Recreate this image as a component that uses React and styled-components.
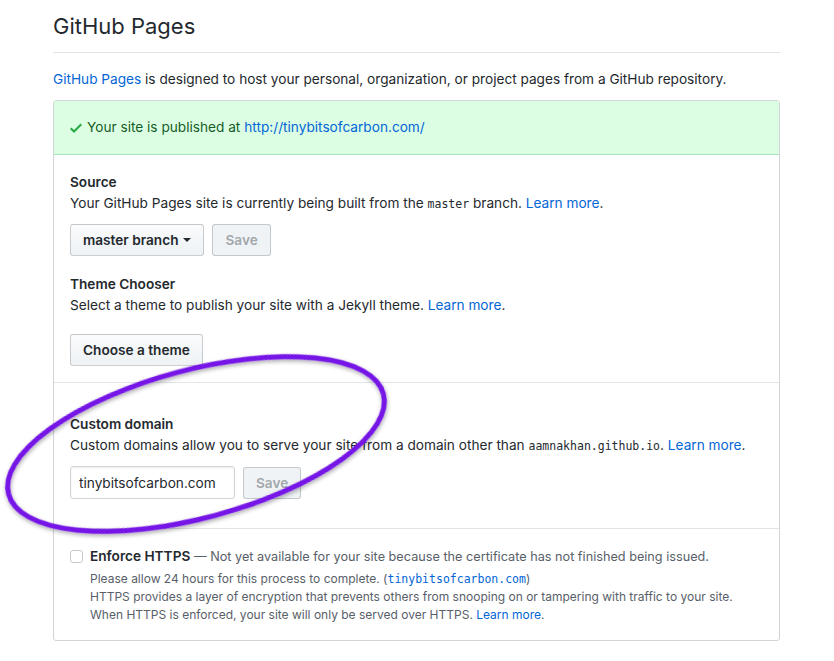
import React from 'react'
import styled, { createGlobalStyle } from 'styled-components'

const GlobalStyle = createGlobalStyle`
  body {
    margin: 0;
    background: #fff;
    font-family: Inter, "Liberation Sans", Arial, sans-serif;
    font-size: 13.65px;
    line-height: 1.5;
    color: #24292e;
  }
  * { box-sizing: border-box; }
`

const App = () => {
  return (
    <Page>
      <GlobalStyle />

      <Heading>GitHub Pages</Heading>

      <Intro>
        <Link href="#">GitHub Pages</Link> is designed to host your personal, organization, or project pages from a GitHub repository.
      </Intro>

      <Box>
        <Flash>
          <CheckIcon viewBox="0 0 12 16" width="12" height="16">
            <path fillRule="evenodd" d="M12 5l-8 8-4-4 1.5-1.5L4 10l6.5-6.5L12 5z" />
          </CheckIcon>
          Your site is published at <Link href="#">http://tinybitsofcarbon.com/</Link>
        </Flash>

        <Section>
          <Title>Source</Title>
          <Desc>
            Your GitHub Pages site is currently being built from the <Code>master</Code> branch. <Link href="#">Learn more</Link>.
          </Desc>
          <Row>
            <Button>master branch <Caret /></Button>
            <Button disabled>Save</Button>
          </Row>

          <Title $spaced>Theme Chooser</Title>
          <Desc>
            Select a theme to publish your site with a Jekyll theme. <Link href="#">Learn more</Link>.
          </Desc>
          <Row $gap={18}>
            <Button>Choose a theme</Button>
          </Row>
        </Section>

        <Section $roomy>
          <Title>Custom domain</Title>
          <Desc>
            Custom domains allow you to serve your site from a domain other than <Code>aamnakhan.github.io</Code>. <Link href="#">Learn more</Link>.
          </Desc>
          <Row>
            <Input defaultValue="tinybitsofcarbon.com" />
            <Button disabled>Save</Button>
          </Row>
        </Section>

        <Section $last>
          <CheckRow>
            <Checkbox />
            <div>
              <CheckLabel>
                <strong>Enforce HTTPS</strong> — Not yet available for your site because the certificate has not finished being issued.
              </CheckLabel>
              <Note>
                Please allow 24 hours for this process to complete. (<LinkCode>tinybitsofcarbon.com</LinkCode>)
                <br />
                HTTPS provides a layer of encryption that prevents others from snooping on or tampering with traffic to your site.
                <br />
                When HTTPS is enforced, your site will only be served over HTTPS. <Link href="#">Learn more</Link>.
              </Note>
            </div>
          </CheckRow>
        </Section>
      </Box>

      <Circle viewBox="0 0 834 661" width="834" height="661">
        <defs>
          <filter id="shadow" x="-20%" y="-20%" width="140%" height="140%">
            <feDropShadow dx="0" dy="2" stdDeviation="2" floodColor="#000" floodOpacity="0.35" />
          </filter>
        </defs>
        <ellipse
          cx="196"
          cy="444"
          rx="194"
          ry="74"
          transform="rotate(-15 196 444)"
          fill="none"
          stroke="#7614e6"
          strokeWidth="5"
          filter="url(#shadow)"
        />
      </Circle>
    </Page>
  )
}

export default App

const Page = styled.div`
  position: relative;
  width: 834px;
  height: 661px;
  padding-left: 53px;
  overflow: hidden;
`

const Heading = styled.h2`
  width: 727px;
  margin: 8px 0 0;
  padding-bottom: 8px;
  font-size: 22px;
  font-weight: 400;
  line-height: 36px;
  border-bottom: 1px solid #e1e4e8;
`

const Intro = styled.p`
  margin: 16px 0 10px;
  line-height: 21px;
`

const Link = styled.a`
  color: #0366d6;
  text-decoration: none;
`

const Box = styled.div`
  width: 727px;
  border: 1px solid #d1d5da;
  border-radius: 3px;
`

const Flash = styled.div`
  display: flex;
  align-items: center;
  gap: 4px;
  padding: 16px 16px;
  line-height: 21px;
  color: #165c26;
  background: #dcffe4;
  border-bottom: 1px solid #a6e3b5;
`

const CheckIcon = styled.svg`
  fill: #28a745;
  margin-right: 1px;
`

const Section = styled.div`
  padding: ${p => (p.$roomy ? '31px 16px 29px' : p.$last ? '16px' : '17px 16px 16px')};
  border-bottom: ${p => (p.$last ? 'none' : '1px solid #e1e4e8')};
`

const Title = styled.div`
  font-weight: 600;
  line-height: 21px;
  margin-top: ${p => (p.$spaced ? '18px' : '0')};
`

const Desc = styled.div`
  line-height: 21px;
`

const Code = styled.code`
  font-family: "DejaVu Sans Mono", "Liberation Mono", monospace;
  font-size: 11.5px;
  line-height: 1;
`

const Row = styled.div`
  display: flex;
  align-items: center;
  gap: 8px;
  margin-top: ${p => p.$gap || 10}px;
`

const Button = styled.button`
  display: inline-flex;
  align-items: center;
  gap: 5px;
  height: 32px;
  padding: 0 12px;
  font-family: inherit;
  font-size: 13.65px;
  font-weight: 600;
  color: ${p => (p.disabled ? 'rgba(36,41,46,0.4)' : '#24292e')};
  background: ${p => (p.disabled ? '#eff3f6' : 'linear-gradient(-180deg, #fafbfc 0%, #eff3f6 90%)')};
  border: 1px solid rgba(27, 31, 35, 0.2);
  border-radius: 3px;
`

const Caret = styled.span`
  display: inline-block;
  width: 0;
  height: 0;
  border-top: 4px solid #24292e;
  border-left: 4px solid transparent;
  border-right: 4px solid transparent;
`

const Input = styled.input`
  width: 165px;
  height: 33px;
  padding: 0 8px;
  font-family: inherit;
  font-size: 13.65px;
  color: #24292e;
  border: 1px solid #d1d5da;
  border-radius: 3px;
  box-shadow: inset 0 1px 2px rgba(27, 31, 35, 0.075);
  outline: none;
`

const CheckRow = styled.div`
  display: flex;
  align-items: flex-start;
  gap: 7px;
`

const Checkbox = styled.span`
  flex: none;
  width: 13px;
  height: 13px;
  margin-top: 5px;
  border: 1px solid #c6c9cc;
  border-radius: 3px;
  background: #fff;
`

const CheckLabel = styled.div`
  font-size: 12.7px;
  line-height: 22px;
  color: #586069;

  strong {
    font-size: 13.65px;
    font-weight: 600;
    color: #24292e;
  }
`

const Note = styled.div`
  margin-top: 2px;
  font-size: 12px;
  line-height: 18px;
  color: #586069;
`

const LinkCode = styled.code`
  font-family: "DejaVu Sans Mono", "Liberation Mono", monospace;
  font-size: 11.5px;
  line-height: 1;
  color: #0366d6;
`

const Circle = styled.svg`
  position: absolute;
  left: 0;
  top: 0;
  pointer-events: none;
`
